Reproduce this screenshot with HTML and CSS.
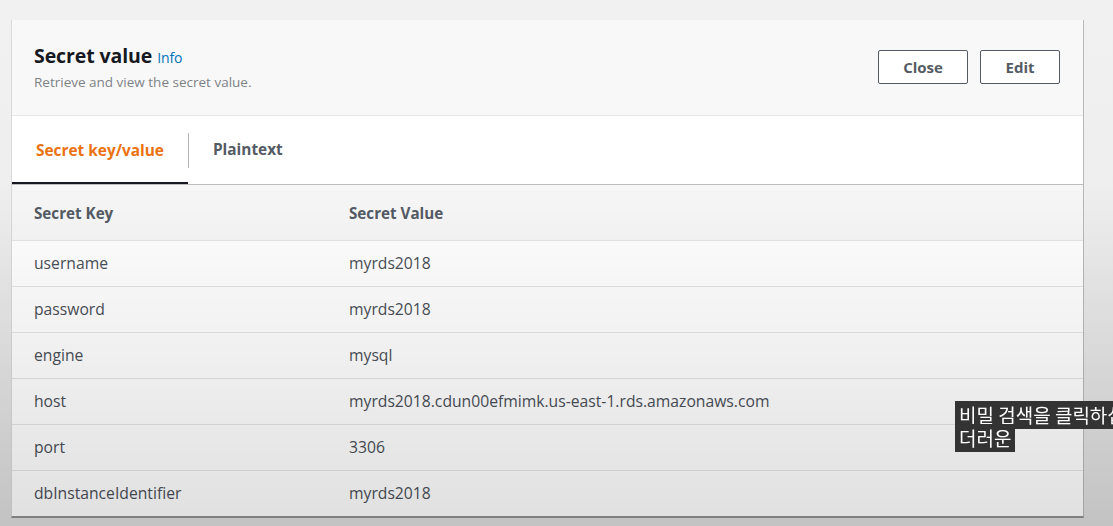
FILE: index.html
```html
<!DOCTYPE html>
<html>
<head>
  <meta charset="UTF-8">
  <title>Secret value</title>
  <link rel="stylesheet" href="styles.css">
</head>
<body>
  <div class="panel">
    <!-- Header -->
    <div class="panel-header">
      <div class="panel-heading">
        <h2 class="panel-title">Secret value <a class="info-link" href="#">Info</a></h2>
        <p class="panel-desc">Retrieve and view the secret value.</p>
      </div>
      <div class="panel-actions">
        <button class="btn btn-close">Close</button>
        <button class="btn btn-edit">Edit</button>
      </div>
    </div>

    <!-- Tabs -->
    <div class="tabs">
      <div class="tab active">Secret key/value</div>
      <div class="tab-divider"></div>
      <div class="tab">Plaintext</div>
    </div>

    <!-- Key/value table -->
    <div class="kv-table">
      <div class="kv-row kv-head">
        <div class="kv-key">Secret Key</div>
        <div class="kv-value">Secret Value</div>
      </div>
      <div class="kv-row">
        <div class="kv-key">username</div>
        <div class="kv-value">myrds2018</div>
      </div>
      <div class="kv-row">
        <div class="kv-key">password</div>
        <div class="kv-value">myrds2018</div>
      </div>
      <div class="kv-row">
        <div class="kv-key">engine</div>
        <div class="kv-value">mysql</div>
      </div>
      <div class="kv-row">
        <div class="kv-key">host</div>
        <div class="kv-value">myrds2018.cdun00efmimk.us-east-1.rds.amazonaws.com</div>
      </div>
      <div class="kv-row">
        <div class="kv-key">port</div>
        <div class="kv-value">3306</div>
      </div>
      <div class="kv-row">
        <div class="kv-key">dbInstanceIdentifier</div>
        <div class="kv-value">myrds2018</div>
      </div>
    </div>
  </div>

  <!-- Video subtitle -->
  <div class="caption">
    <span class="caption-line">비밀 검색을 클릭하십</span><br>
    <span class="caption-line">더러운</span>
  </div>
</body>
</html>
```

FILE: styles.css
```css
/* Global styles */
* {
  margin: 0;
  padding: 0;
  box-sizing: border-box;
}

:root {
  --text-color: #4b5058;
  --title-color: #16191f;
  --orange: #ec7211;
  --link-color: #0073bb;
  --border-color: #e4e6e6;
}

html, body {
  height: 100%;
  overflow: hidden;
}

body {
  font-family: "Open Sans", "Liberation Sans", sans-serif;
  color: var(--text-color);
  background: linear-gradient(to bottom, #f1f1f1 0%, #eeeeee 40%, #dedede 100%);
  padding: 20px 0 0 11px;
}

/* darkening of the video frame towards the bottom */
body::after {
  content: "";
  position: fixed;
  top: 0;
  left: 0;
  right: 0;
  bottom: 0;
  pointer-events: none;
  background: linear-gradient(to bottom, rgba(0, 0, 0, 0) 0%, rgba(0, 0, 0, 0) 35%, rgba(0, 0, 0, 0.12) 100%);
  z-index: 5;
}

/* Panel */
.panel {
  width: 1073px;
  background-color: #ffffff;
  border-left: 1px solid #d9d9d9;
  border-right: 1px solid #b9b9b9;
  border-bottom: 2px solid #8f9292;
}

.panel-header {
  display: flex;
  justify-content: space-between;
  align-items: flex-start;
  height: 96px;
  padding: 23px 23px 0 22px;
  background-color: #f8f8f8;
  border-bottom: 1px solid #e6e6e6;
}

.panel-title {
  font-size: 19.5px;
  font-weight: 700;
  color: var(--title-color);
  line-height: 26px;
  letter-spacing: -0.1px;
}

.info-link {
  font-size: 14px;
  font-weight: 400;
  color: var(--link-color);
  text-decoration: none;
}

.panel-desc {
  font-size: 13.5px;
  color: #7d8287;
  margin-top: 1px;
  line-height: 20px;
}

.panel-actions {
  display: flex;
  gap: 12px;
  margin-top: 7px;
}

.btn {
  height: 34px;
  border: 1px solid #545b64;
  border-radius: 2px;
  background-color: #ffffff;
  color: #545b64;
  font-family: "Open Sans", "Liberation Sans", sans-serif;
  font-size: 15px;
  font-weight: 700;
  cursor: pointer;
}

.btn-close {
  width: 90px;
}

.btn-edit {
  width: 80px;
}

/* Tabs */
.tabs {
  display: flex;
  align-items: center;
  height: 69px;
  border-bottom: 1px solid #bcbcbc;
}

.tab {
  height: 100%;
  display: flex;
  align-items: center;
  padding: 0 24px;
  font-size: 15.4px;
  font-weight: 700;
  color: #545b64;
  border-bottom: 2px solid transparent;
}

.tab.active {
  color: var(--orange);
  border-bottom: 2px solid #16191f;
  padding: 2px 24px 0 24px;
}

.tab-divider {
  width: 1px;
  height: 35px;
  background-color: #b5b5b5;
}

/* Key/value table */
.kv-table {
  font-size: 15.7px;
}

.kv-row {
  display: flex;
  align-items: center;
  height: 46px;
  padding-bottom: 2px;
  border-top: 1px solid var(--border-color);
}

.kv-row:first-child {
  border-top: none;
}

.kv-head {
  height: 55px;
  padding-bottom: 0;
  background-color: #f6f6f6;
  font-size: 15.2px;
  font-weight: 700;
  color: #545b64;
}

.kv-key {
  width: 337px;
  padding-left: 22px;
}

.kv-value {
  flex-grow: 1;
}

/* Subtitle */
.caption {
  position: absolute;
  left: 955px;
  top: 403px;
  z-index: 10;
  white-space: nowrap;
  font-family: "Noto Sans CJK KR", sans-serif;
  font-size: 19px;
  line-height: 23px;
  color: #ffffff;
}

.caption-line {
  background-color: #333333;
  padding: 0 4px 1px 4px;
}
```
